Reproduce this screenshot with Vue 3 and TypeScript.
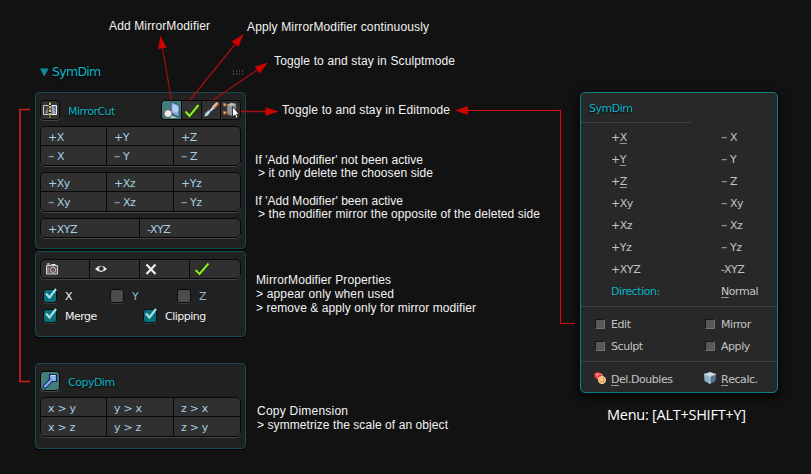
<script setup lang="ts">
interface Note { text: string; x: number; y: number; w: number }
interface Arrow { x1: number; y1: number; x2: number; y2: number }
interface Entry { sign: string; key?: string; label: string }

const notes: Note[] = [
  { text: 'Add MirrorModifier', x: 109, y: 30, w: 101 },
  { text: 'Apply MirrorModifier continuously', x: 247, y: 31, w: 182 },
  { text: 'Toggle to and stay in Sculptmode', x: 274, y: 65, w: 181 },
  { text: 'Toggle to and stay in Editmode', x: 282, y: 114, w: 168 },
  { text: "If 'Add Modifier' not been active", x: 255, y: 164, w: 168 },
  { text: '> it only delete the choosen side', x: 258, y: 177, w: 175 },
  { text: "If 'Add Modifier' been active", x: 255, y: 205, w: 148 },
  { text: '> the modifier mirror the opposite of the deleted side', x: 258, y: 218, w: 282 },
  { text: 'MirrorModifier Properties', x: 256, y: 284, w: 135 },
  { text: '> appear only when used', x: 256, y: 298, w: 138 },
  { text: '> remove & apply only for mirror modifier', x: 256, y: 312, w: 220 },
  { text: 'Copy Dimension', x: 257, y: 415, w: 91 },
  { text: '> symmetrize the scale of an object', x: 257, y: 429, w: 191 },
]

const arrows: Arrow[] = [
  { x1: 171.5, y1: 100, x2: 160.3, y2: 36 },
  { x1: 190, y1: 100, x2: 243, y2: 34.5 },
  { x1: 213, y1: 100, x2: 267.5, y2: 63 },
  { x1: 241, y1: 111.5, x2: 278, y2: 111.5 },
]

function head(a: Arrow): string {
  const len = Math.hypot(a.x2 - a.x1, a.y2 - a.y1)
  const ux = (a.x2 - a.x1) / len
  const uy = (a.y2 - a.y1) / len
  const bx = a.x2 - ux * 12.5
  const by = a.y2 - uy * 12.5
  return `${a.x2},${a.y2} ${bx - uy * 4.3},${by + ux * 4.3} ${bx + uy * 4.3},${by - ux * 4.3}`
}

const axes: Entry[][] = [
  [
    { sign: '+', label: 'X' }, { sign: '+', label: 'Y' }, { sign: '+', label: 'Z' },
    { sign: '–', label: 'X' }, { sign: '–', label: 'Y' }, { sign: '–', label: 'Z' },
  ],
  [
    { sign: '+', label: 'Xy' }, { sign: '+', label: 'Xz' }, { sign: '+', label: 'Yz' },
    { sign: '–', label: 'Xy' }, { sign: '–', label: 'Xz' }, { sign: '–', label: 'Yz' },
  ],
]
const copies = ['x > y', 'y > x', 'z > x', 'x > z', 'y > z', 'z > y']

const menu: Entry[] = [
  { sign: '+', key: 'X', label: '' }, { sign: '–', label: 'X' },
  { sign: '+', key: 'Y', label: '' }, { sign: '–', label: 'Y' },
  { sign: '+', key: 'Z', label: '' }, { sign: '–', label: 'Z' },
  { sign: '+', label: 'Xy' }, { sign: '–', label: 'Xy' },
  { sign: '+', label: 'Xz' }, { sign: '–', label: 'Xz' },
  { sign: '+', label: 'Yz' }, { sign: '–', label: 'Yz' },
  { sign: '+', label: 'XYZ' }, { sign: '', label: '-XYZ' },
]
const toggles = ['Edit', 'Mirror', 'Sculpt', 'Apply']
</script>

<template>
  <main class="canvas">
    <header class="title">
      <svg class="tri" width="9" height="9" viewBox="0 0 9 9"><path d="M0 .5h8.6L4.3 8.5z" fill="#0e8e99" /></svg>
      <h1>SymDim</h1>
      <svg class="grip" width="12" height="5" viewBox="0 0 12 5">
        <path d="M0 1h12M0 4h12" stroke="#777" stroke-width="1" stroke-dasharray="1 2" />
      </svg>
    </header>

    <div class="stack">
      <section class="panel cut">
        <div class="head">
          <span class="tool">
            <svg width="18" height="18" viewBox="0 0 18 18">
              <path d="M2.500 4.500h6v9h-6z" fill="#3b3d3f" stroke="#c9cdd0" />
              <path d="M9.500 4.500h6v9h-6z" fill="#66778f" stroke="#e8edf0" />
              <path d="M3.500 12l4-7v8z" fill="#777b7e" />
              <path d="M10.500 5h2l2 7-2 1h-2z" fill="#93a5bd" />
              <path d="M9 1.500v15" stroke="#0b0b0b" stroke-width="2.600" />
              <path d="M9 1.500v15" stroke="#f1d777" stroke-width="1.800" stroke-dasharray="2.500 1" />
            </svg>
          </span>
          <h2>MirrorCut</h2>
          <div class="tools">
            <span class="on">
              <svg width="18" height="18" viewBox="0 0 18 18">
                <path d="M8 1l8 3v12l-8-4z" fill="#8fb0dd" stroke="#28496f" stroke-width=".8" />
                <path d="M10 3.500l4.500 2v4.500l-3 1.500z" fill="#c8d9f0" />
                <circle cx="12.600" cy="8" r="3" fill="#b7cdee" />
                <circle cx="5" cy="12.600" r="4" fill="#eee" stroke="#333" stroke-width=".7" />
                <path d="M9 14.500l5 2.500H7z" fill="#dfe9f2" opacity=".7" />
              </svg>
            </span>
            <span>
              <svg width="18" height="18" viewBox="0 0 18 18">
                <path d="M2.500 10.500l4 4.500L15.500 4" fill="none" stroke="#172c04" stroke-width="3.800" />
                <path d="M2.500 10.500l4 4.500L15.500 4" fill="none" stroke="#8be82c" stroke-width="2.200" />
              </svg>
            </span>
            <span>
              <svg width="18" height="18" viewBox="0 0 18 18">
                <path d="M11.500 6.500l3.500-3.800" stroke="#b98865" stroke-width="3.400" stroke-linecap="round" />
                <path d="M11.500 5.500l3-3" stroke="#f0cfb0" stroke-width="1.500" stroke-linecap="round" />
                <path d="M7.500 10.500l4-4" stroke="#d5dde4" stroke-width="2" />
                <path d="M2 16l1-4 4-3.500 2 2L6 15z" fill="#a9b9c8" stroke="#2a333a" stroke-width=".6" />
                <path d="M3 15l4.500-4.500" stroke="#e5edf4" />
              </svg>
            </span>
            <span>
              <svg width="18" height="18" viewBox="0 0 18 18">
                <path d="M5 4l4-2 5 1v10l-4 2-5-2z" fill="#929292" stroke="#555" stroke-width=".6" />
                <path d="M5 4l5 1 4-2-5-1z" fill="#c3c3c3" />
                <path d="M1.500 2.500h2.500v2.500h-2.500zM1.500 10.500h2.500v2.500h-2.500z" fill="#f5b06a" stroke="#b5672b" />
                <path d="M10.500 5.500v10.500l2.300-2 1.500 3.200 1.800-.8-1.500-3.200h2.600z" fill="#fff" stroke="#151515" stroke-width=".8" />
              </svg>
            </span>
          </div>
        </div>
        <div v-for="(group, g) in axes" :key="g" class="grid three">
          <span v-for="(c, i) in group" :key="i"><i :class="{ dash: c.sign === '–' }">{{ c.sign }}</i>{{ c.label }}</span>
        </div>
        <div class="grid two"><span>+XYZ</span><span>-XYZ</span></div>
      </section>

      <section class="panel props">
        <div class="grid four">
          <span>
            <svg width="14" height="14" viewBox="0 0 14 14">
              <path d="M1.500 3.500h11v8.500h-11z" fill="#5b5b5b" stroke="#d0d0d0" />
              <path d="M2 2h3M6.500 2.500h4" stroke="#eee" />
              <path d="M3 5v6" stroke="#a9a9a9" />
              <circle cx="8" cy="7.800" r="2.600" fill="#444" stroke="#c6c6c6" />
              <circle cx="8" cy="7.800" r="1.300" fill="#b95045" />
            </svg>
          </span>
          <span>
            <svg width="14" height="14" viewBox="0 0 14 14">
              <path d="M1 7q6-6.500 12 0-6 6-12 0z" fill="#efefef" />
              <circle cx="7.300" cy="6.500" r="2.600" fill="#777" /><circle cx="7.300" cy="6.500" r="1.400" fill="#111" />
            </svg>
          </span>
          <span>
            <svg width="14" height="14" viewBox="0 0 14 14"><path d="M2.500 2.500l9 9.500M11.500 2.500l-9 9.500" stroke="#eee" stroke-width="2.200" /></svg>
          </span>
          <span>
            <svg class="wide" width="16" height="14" viewBox="0 0 16 14">
              <path d="M1.500 8l4 4L14.500 1.500" fill="none" stroke="#172c04" stroke-width="3.600" />
              <path d="M1.500 8l4 4L14.500 1.500" fill="none" stroke="#8be82c" stroke-width="2.100" />
            </svg>
          </span>
        </div>
        <div class="checks">
          <label class="third sel"><b><svg width="16" height="15" viewBox="0 0 16 15"><path d="M4 6.500l3.500 4L14 2" /></svg></b>X</label>
          <label class="third"><b></b>Y</label>
          <label class="third"><b></b>Z</label>
        </div>
        <div class="checks">
          <label v-for="t in ['Merge', 'Clipping']" :key="t" class="half sel"><b><svg width="16" height="15" viewBox="0 0 16 15"><path d="M4 6.500l3.500 4L14 2" /></svg></b>{{ t }}</label>
        </div>
      </section>

      <section class="panel copy">
        <div class="head">
          <span class="tool on">
            <svg width="18" height="18" viewBox="0 0 18 18">
              <path d="M4 14.500l6-6" stroke="#14285a" stroke-width="4.500" stroke-linecap="round" />
              <path d="M8.500 2.500h7v7h-4l-3-3z" fill="#8eb1f5" stroke="#14285a" stroke-width="1.200" />
              <path d="M4 14.500l6.500-6.500" stroke="#86a9ef" stroke-width="2.400" stroke-linecap="round" />
              <path d="M10 3.500h4.500" stroke="#c7dafd" />
            </svg>
          </span>
          <h2>CopyDim</h2>
        </div>
        <div class="grid three"><span v-for="c in copies" :key="c">{{ c }}</span></div>
      </section>
    </div>

    <aside class="menu">
      <h2>SymDim</h2>
      <div class="rule short"></div>
      <div class="list">
        <span v-for="(m, i) in menu" :key="i"><i :class="{ dash: m.sign === '–' }">{{ m.sign }}</i><u v-if="m.key">{{ m.key }}</u>{{ m.label }}</span>
        <span class="accent">Direction:</span><span><u>N</u>ormal</span>
      </div>
      <div class="rule"></div>
      <div class="list opts">
        <span v-for="t in toggles" :key="t"><b class="box"></b>{{ t }}</span>
      </div>
      <div class="rule"></div>
      <div class="list acts">
        <span>
          <svg width="14" height="14" viewBox="0 0 14 14">
            <circle cx="4.500" cy="4.500" r="3.400" fill="#e02a22" /><circle cx="4" cy="3.500" r="1.300" fill="#ff9a8d" />
            <circle cx="7" cy="5.500" r="2.800" fill="#e9372c" stroke="#fff" stroke-width=".5" />
            <circle cx="9" cy="9" r="3.500" fill="#f59b40" stroke="#ffe9d0" /><circle cx="8.500" cy="8.500" r="1.500" fill="#ffd49b" />
          </svg><u>D</u>el.Doubles
        </span>
        <span>
          <svg width="14" height="14" viewBox="0 0 14 14">
            <path d="M1 3l6-2 6 2-6 2.500z" fill="#c5dbe9" /><path d="M1 3l6 2.500V13l-5.500-3z" fill="#8eafc6" /><path d="M13 3L7 5.500V13l5.500-3z" fill="#54758f" />
            <path d="M1 3l6 2.500L13 3M7 5.500V13" fill="none" stroke="#d9e8f2" stroke-width=".7" />
          </svg><u>R</u>ecalc.
        </span>
      </div>
    </aside>

    <svg class="overlay" width="811" height="474" viewBox="0 0 811 474">
      <path d="M30 109.500H20V381.500H30" fill="none" stroke="#d31f24" stroke-width="1.600" />
      <g v-for="(a, i) in arrows" :key="i">
        <line :x1="a.x1" :y1="a.y1" :x2="a.x2" :y2="a.y2" stroke="#a60c0c" stroke-width="1.300" />
        <polygon :points="head(a)" fill="#cf0202" />
      </g>
      <path d="M465 110.500H560.500V323.500H575" fill="none" stroke="#e00808" stroke-width="1.100" />
      <path d="M455 110.500l13-4.500v9z" fill="#cf0202" />
      <text v-for="n in notes" :key="n.text" :x="n.x" :y="n.y" :textLength="n.w" class="note">{{ n.text }}</text>
      <text x="607" y="420" textLength="139" class="caption">Menu: [ALT+SHIFT+Y]</text>
    </svg>
  </main>
</template>

<style>
body { background: #121212; }
</style>

<style scoped>
* { box-sizing: border-box; }
.canvas {
  position: relative; width: 811px; height: 474px; overflow: hidden; background: #121212;
  font: 11px/14px "DejaVu Sans", sans-serif; letter-spacing: -0.5px; color: #a6cfe3;
}
h1, h2 { margin: 0; font-weight: 400; color: #0bb5c6; text-shadow: 0 1px 2px #000; }
h1 { font-size: 12.500px; line-height: 16px; letter-spacing: -0.7px; }
h2 { font-size: 11px; line-height: 14px; }
i { font-style: normal; }
.title { display: flex; align-items: center; width: 245px; padding: 64px 0 0 40px; height: 80px; }
.title h1 { margin-left: 3px; }
.grip { margin-left: auto; }
.stack { display: flex; flex-direction: column; width: 211px; margin: 12px 0 0 35px; }
.panel { border: 1px solid #124c51; border-radius: 4px; background: #212121; padding: 7px 4px 0; box-shadow: 0 1px 1px #000; }
.cut { height: 157px; }
.props { height: 86px; margin-top: 2px; }
.copy { height: 86px; margin-top: 26px; }
.head { display: flex; align-items: center; height: 20px; margin-bottom: 6px; }
.head h2 { margin: 4px 0 0 8px; }
.tool { display: flex; align-items: center; justify-content: center; width: 20px; height: 20px; border: 1px solid #070707; border-radius: 4px; background: #343434; box-shadow: 0 1px 0 #444; }
.tool svg { flex: none; }
.tools { display: flex; width: 80px; height: 20px; margin-left: auto; border: 1px solid #070707; border-radius: 4px; overflow: hidden; background: #303030; }
.tools span { width: 20px; display: flex; justify-content: center; }
.tools span + span { border-left: 1px solid #070707; }
.tools svg { flex: none; }
.tools .on, .tool.on { background: #417d7a; }
.grid { display: grid; gap: 1px; width: 201px; border: 1px solid #070707; border-radius: 5px; background: #070707; overflow: hidden; margin-bottom: 6px; box-shadow: 0 1px 0 #444; }
.grid > span { background: #303030; padding: 4px 0 0 7px; white-space: pre; line-height: 14px; }
.three { grid-template-columns: 65px 66px 1fr; grid-template-rows: 18px 19px; height: 40px; }
.two { grid-template-columns: 98px 1fr; height: 20px; }
.four { grid-template-columns: 48px 49px 49px 1fr; height: 20px; }
.four > span { padding: 2px 0 0 4px; }
.four svg { display: block; }
.copy .grid > span { letter-spacing: -0.3px; }
.dash { display: inline-block; width: 8px; margin-right: 1px; color: #7e9aa6; font-weight: 700; letter-spacing: 0; transform: scaleX(1.15); transform-origin: left; }
.checks { display: flex; height: 14px; margin: 10px 0 6px 3px; color: #8ebed2; }
.checks + .checks { margin-top: 0; }
label { display: flex; flex: none; gap: 8px; height: 14px; line-height: 15px; }
.third { width: 67px; }
.half { width: 100px; }
.sel { color: #f0f0f0; }
label b { position: relative; width: 14px; height: 14px; background: #4c4c4c; border: 1px solid #0d0d0d; border-radius: 3px; box-shadow: 0 1px 0 #3a3a3a; }
.sel b { background: #08707c; }
label svg { position: absolute; left: -2px; top: -3px; }
label path { fill: none; stroke: #a9dfe3; stroke-width: 2.2; }
.menu {
  position: absolute; left: 580px; top: 92px; width: 198px; height: 301px; border: 1px solid #0a8087; border-radius: 5px;
  background: #282828; color: #c4c4c4; box-shadow: 0 3px 8px #000; display: flex; flex-direction: column;
}
.menu h2 { padding: 9px 0 0 8px; height: 29px; letter-spacing: -0.5px; }
.rule { height: 1px; background: #404040; flex: none; }
.short { width: 110px; margin-bottom: 3px; }
.list { display: grid; grid-template-columns: 110px 1fr; grid-auto-rows: 22px; padding: 1px 0 0 30px; line-height: 22px; white-space: nowrap; height: 181px; letter-spacing: -0.45px; }
.list .dash { color: #8e8e8e; }
.accent { color: #0bb5c6; }
u { text-underline-offset: 2px; text-decoration-color: #999; text-decoration-thickness: 1px; text-decoration-skip-ink: none; }
.opts { height: 54px; padding: 7px 0 0 13px; }
.opts span, .acts span { display: flex; align-items: center; }
.box { width: 10px; height: 10px; margin: -3px 6px 0 1px; background: #585858; border: 1px solid #111; border-color: #161616 #707070 #707070 #161616; }
.acts { height: 30px; padding: 7px 0 0 12px; }
.acts svg { margin: -4px 4px 0 0; }
.overlay { position: absolute; left: 0; top: 0; }
.note { font: 12px "Liberation Sans", Arial, sans-serif; fill: #f2f2f2; letter-spacing: 0; }
.caption { font: 14.500px "Open Sans", "Noto Sans", sans-serif; fill: #fff; letter-spacing: 0; }
</style>
